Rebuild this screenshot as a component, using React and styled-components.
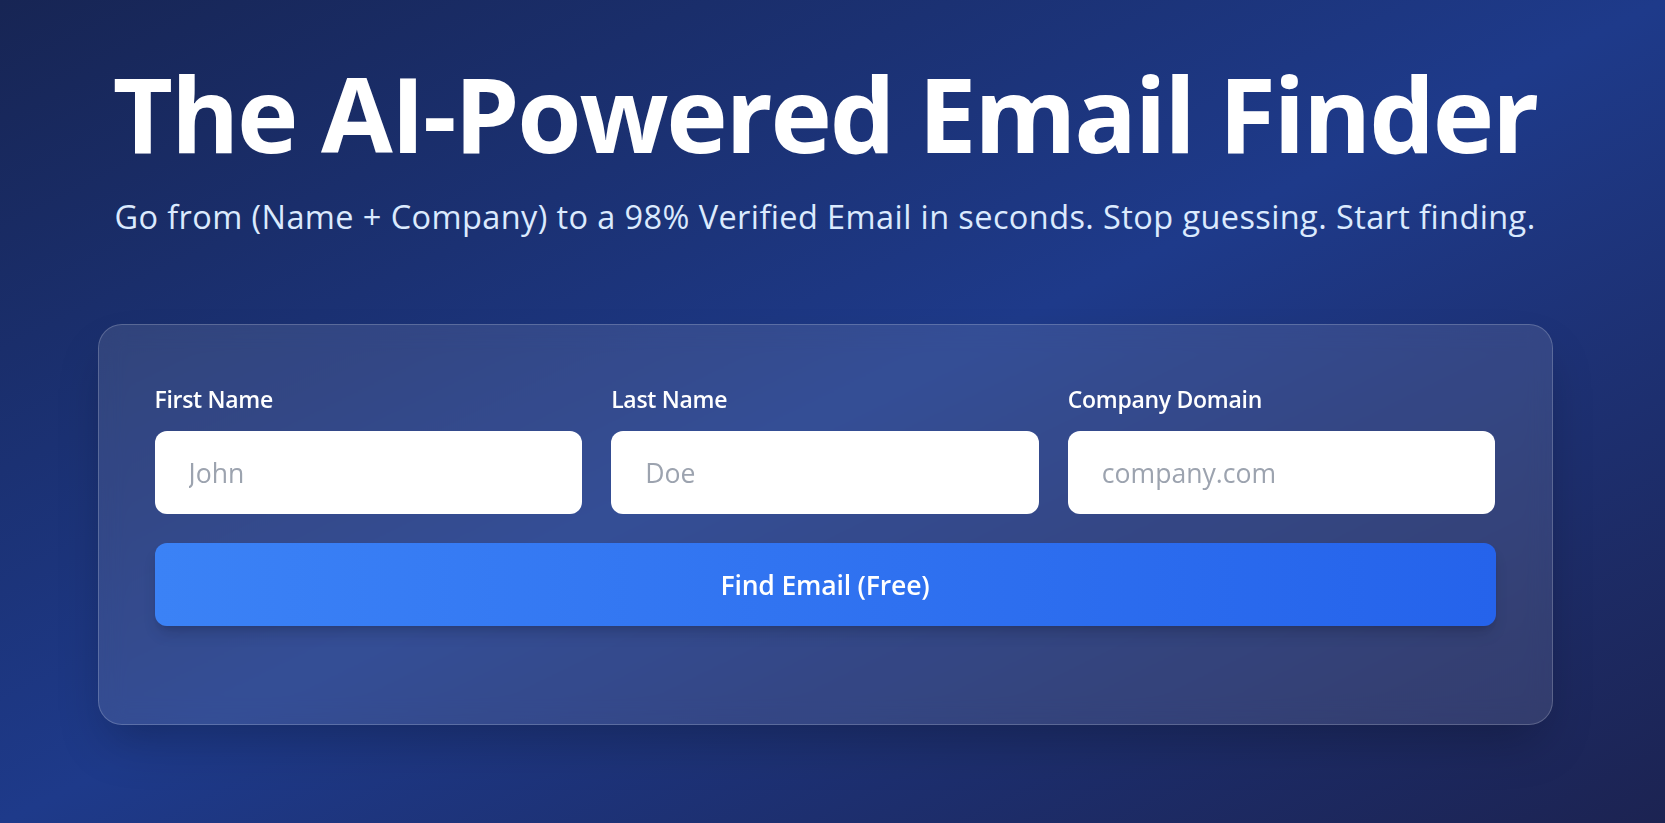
import React from 'react';
import styled, { createGlobalStyle } from 'styled-components';

const GlobalStyle = createGlobalStyle`
  html, body {
    margin: 0;
    padding: 0;
  }
  body {
    font-family: "Open Sans", "Noto Sans", "Liberation Sans", sans-serif;
  }
  * {
    box-sizing: border-box;
  }
`;

const Page = styled.main`
  min-height: 100vh;
  padding: 56px 15px 80px 0;
  background: linear-gradient(to bottom right, #172554 0%, #1e3a8a 50%, #1c2352 100%);
`;

const Hero = styled.header`
  display: flex;
  flex-direction: column;
  align-items: center;
  gap: 24px;
  text-align: center;
`;

const Title = styled.h1`
  margin: 0;
  font-size: 104px;
  line-height: 1.1;
  font-weight: 700;
  letter-spacing: -2.2px;
  color: #ffffff;
`;

const Subtitle = styled.p`
  margin: 0;
  font-size: 32.5px;
  line-height: 1.4;
  font-weight: 400;
  letter-spacing: 0.4px;
  color: #dbeafe;
`;

const Card = styled.section`
  width: 1455px;
  margin: 84px auto 0;
  padding: 58px 56px 98px;
  border: 1px solid rgba(255, 255, 255, 0.2);
  border-radius: 24px;
  background: rgba(255, 255, 255, 0.1);
  backdrop-filter: blur(12px);
  box-shadow: 0 25px 50px -12px rgba(0, 0, 0, 0.25);
`;

const Fields = styled.div`
  display: grid;
  grid-template-columns: repeat(3, 1fr);
  gap: 29px;
`;

const Field = styled.label`
  display: flex;
  flex-direction: column;
  gap: 16px;
`;

const Label = styled.span`
  font-size: 23px;
  line-height: 1.4;
  font-weight: 600;
  letter-spacing: -0.3px;
  color: #ffffff;
`;

const Input = styled.input`
  height: 83px;
  width: 100%;
  padding: 0 34px;
  border: none;
  border-radius: 12px;
  background: #ffffff;
  font-family: inherit;
  font-size: 26.6px;
  color: #111827;
  outline: none;

  &::placeholder {
    color: #9ca3af;
  }
`;

const Button = styled.button`
  display: block;
  width: 100%;
  height: 83px;
  margin-top: 29px;
  border: none;
  border-radius: 12px;
  background: linear-gradient(to right, #3b82f6, #2563eb);
  box-shadow: 0 10px 15px -3px rgba(0, 0, 0, 0.15), 0 4px 6px -4px rgba(0, 0, 0, 0.15);
  font-family: inherit;
  font-size: 26.6px;
  font-weight: 600;
  letter-spacing: -0.2px;
  color: #ffffff;
  cursor: pointer;
`;

const fields = [
  { id: 'first', label: 'First Name', placeholder: 'John' },
  { id: 'last', label: 'Last Name', placeholder: 'Doe' },
  { id: 'domain', label: 'Company Domain', placeholder: 'company.com' },
];

const App = () => (
  <>
    <GlobalStyle />
    <Page>
      <Hero>
        <Title>The AI-Powered Email Finder</Title>
        <Subtitle>
          Go from (Name + Company) to a 98% Verified Email in seconds. Stop guessing. Start finding.
        </Subtitle>
      </Hero>
      <Card>
        <Fields>
          {fields.map(f => (
            <Field key={f.id}>
              <Label>{f.label}</Label>
              <Input type="text" placeholder={f.placeholder} />
            </Field>
          ))}
        </Fields>
        <Button type="button">Find Email (Free)</Button>
      </Card>
    </Page>
  </>
);

export default App;
